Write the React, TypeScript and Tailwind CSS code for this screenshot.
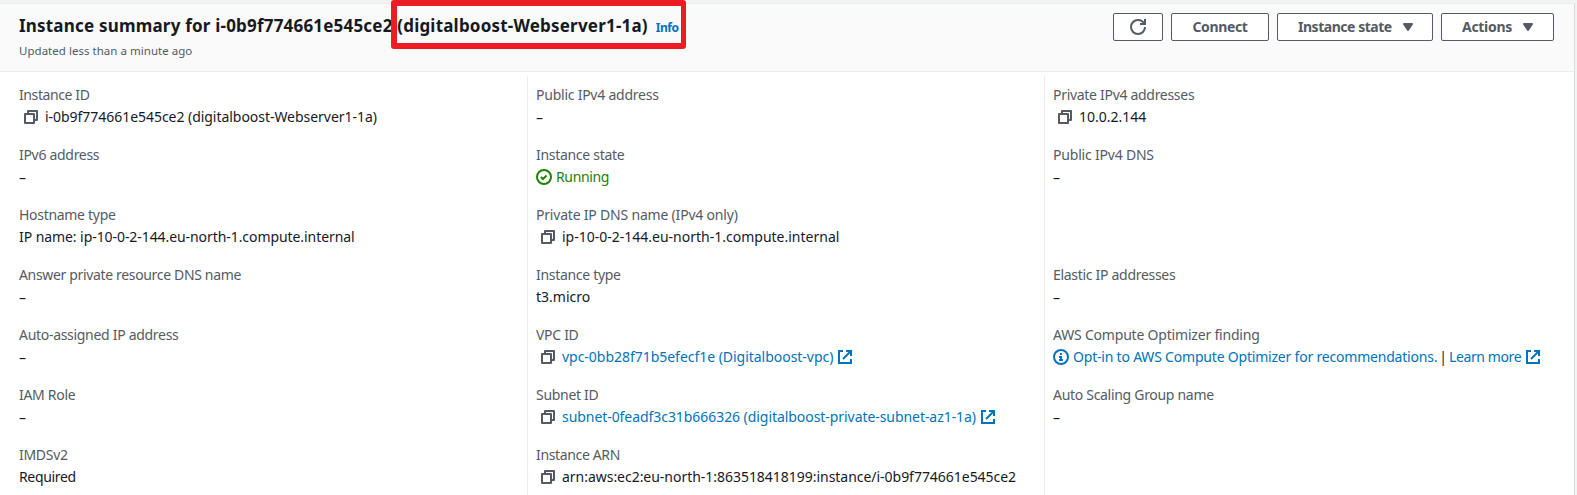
import type { ReactNode } from "react";

type IconProps = { className?: string };

function Icon({ className = "", children }: { className?: string; children: ReactNode }) {
  return (
    <svg viewBox="0 0 16 16" className={`size-4 shrink-0 fill-none stroke-current stroke-2 ${className}`}>
      {children}
    </svg>
  );
}

const CopyIcon = () => (
  <Icon className="ml-1 mr-1.5 text-[#545b64]">
    <path d="M2 5h9v9H2z" strokeLinejoin="round" />
    <path d="M5 5V2h9v9h-3" strokeLinejoin="round" />
  </Icon>
);

const ExternalIcon = ({ className }: IconProps) => (
  <Icon className={className}>
    <path d="M9 2h5v5" />
    <path d="m6 10 7.5-7.5" />
    <path d="M14 10v4H2V2h4" />
  </Icon>
);

const RefreshIcon = () => (
  <Icon>
    <path d="M10 5h5V0" />
    <path d="M15 8a7 7 0 0 1-14 0 7 7 0 0 1 7-7 6.87 6.87 0 0 1 6.3 4" />
  </Icon>
);

const CaretIcon = () => (
  <Icon className="ml-2">
    <path d="M4 5h8l-4 6-4-6z" fill="currentColor" strokeLinejoin="round" />
  </Icon>
);

const SuccessIcon = () => (
  <Icon className="mr-1">
    <circle cx="8" cy="8" r="7" />
    <path d="m5 8 2 2 3.5-3.5" />
  </Icon>
);

const InfoIcon = () => (
  <Icon className="mr-1">
    <circle cx="8" cy="8" r="7" />
    <path d="M8 11V8H6M10 11H6M8 6V4" />
  </Icon>
);

function Field({ label, tight = "tracking-[-0.3px]", children }: { label: string; tight?: string; children?: ReactNode }) {
  return (
    <div className="h-11">
      <div className="flex h-[22px] text-[#545b64]"><span className={tight}>{label}</span></div>
      <div className="flex h-[22px] items-center">{children ?? <span className="pt-0.5">–</span>}</div>
    </div>
  );
}

function Button({ className, children }: { className: string; children: ReactNode }) {
  return (
    <button className={`flex h-7 items-center rounded-xs border border-[#545b64] bg-white font-bold ${className}`}>
      {children}
    </button>
  );
}

export default function App() {
  return (
    <div className="h-[495px] w-[1577px] overflow-hidden bg-[#f2f3f3] pt-[3px] font-['Noto_Sans','Open_Sans',sans-serif] text-sm leading-[22px] whitespace-nowrap text-[#16191f]">
      <div className="h-full w-[1575px] border-t border-r border-t-[#eaeded] border-r-[#d5dbdb] bg-white">
        <header className="relative flex h-[68px] justify-between border-b border-[#eaeded] bg-[#fafafa] pr-5 pl-[19px]">
          <div className="pt-[11px]">
            <div className="flex items-baseline">
              <h1 className="text-[17px] font-bold tracking-[0.2px]">
                Instance summary for i-0b9f774661e545ce2 (digitalboost-Webserver1-1a)
              </h1>
              <a className="ml-2 text-xs font-bold tracking-[-0.5px] text-[#0073bb]">Info</a>
            </div>
            <p className="mt-[3px] text-[11.5px] tracking-[0.03px] text-[#545b64]">Updated less than a minute ago</p>
          </div>
          <div className="flex gap-2 pt-[9px] text-[#545b64]">
            <Button className="w-[50px] justify-center"><RefreshIcon /></Button>
            <Button className="w-[98px] justify-center tracking-[-0.35px]">Connect</Button>
            <Button className="w-[156px] pl-5 tracking-[-0.47px]">Instance state<CaretIcon /></Button>
            <Button className="w-[113px] pl-5 tracking-[-0.3px]">Actions<CaretIcon /></Button>
          </div>
          <div className="absolute top-[-4px] left-[391px] h-[49px] w-[295px] rounded-[3px] border-6 border-r-5 border-[#ed1c24]" />
        </header>

        <main className="mt-1 grid h-[419px] grid-cols-[527px_517px_530px]">
          <section className="flex flex-col gap-4 pt-2 pl-[19px]">
            <Field label="Instance ID" tight="tracking-[-0.4px]">
              <CopyIcon /><span className="tracking-[-0.04px]">i-0b9f774661e545ce2 (digitalboost-Webserver1-1a)</span>
            </Field>
            <Field label="IPv6 address" />
            <Field label="Hostname type">
              <span className="tracking-[-0.07px]">IP name: ip-10-0-2-144.eu-north-1.compute.internal</span>
            </Field>
            <Field label="Answer private resource DNS name" tight="tracking-[-0.34px]" />
            <Field label="Auto-assigned IP address" />
            <Field label="IAM Role" />
            <Field label="IMDSv2"><span className="tracking-[-0.35px]">Required</span></Field>
          </section>

          <section className="flex flex-col gap-4 border-l border-[#eaeded] pt-2 pl-2">
            <Field label="Public IPv4 address" tight="tracking-[-0.24px]" />
            <Field label="Instance state">
              <span className="flex items-center text-[#1d8102]"><SuccessIcon /><span className="tracking-[-0.35px]">Running</span></span>
            </Field>
            <Field label="Private IP DNS name (IPv4 only)" tight="tracking-[-0.2px]">
              <CopyIcon />ip-10-0-2-144.eu-north-1.compute.internal
            </Field>
            <Field label="Instance type">t3.micro</Field>
            <Field label="VPC ID">
              <CopyIcon />
              <a className="flex items-center text-[#0073bb]"><span className="tracking-[-0.03px]">vpc-0bb28f71b5efecf1e (Digitalboost-vpc)</span><ExternalIcon className="ml-1" /></a>
            </Field>
            <Field label="Subnet ID">
              <CopyIcon />
              <a className="flex items-center text-[#0073bb]"><span className="tracking-[-0.06px]">subnet-0feadf3c31b666326 (digitalboost-private-subnet-az1-1a)</span><ExternalIcon className="ml-1" /></a>
            </Field>
            <Field label="Instance ARN" tight="tracking-[-0.35px]">
              <CopyIcon /><span className="tracking-[-0.03px]">arn:aws:ec2:eu-north-1:863518418199:instance/i-0b9f774661e545ce2</span>
            </Field>
          </section>

          <section className="flex flex-col gap-4 border-l border-[#eaeded] pt-2 pl-2">
            <Field label="Private IPv4 addresses"><CopyIcon />10.0.2.144</Field>
            <Field label="Public IPv4 DNS" tight="tracking-[-0.2px]" />
            <div className="h-11" />
            <Field label="Elastic IP addresses" />
            <Field label="AWS Compute Optimizer finding" tight="tracking-[-0.2px]">
              <a className="flex items-center text-[#0073bb]"><InfoIcon /><span className="tracking-[-0.2px]">Opt-in to AWS Compute Optimizer for recommendations.</span></a>
              <span className="mx-0.5">|</span>
              <a className="flex items-center text-[#0073bb]"><span className="tracking-[-0.4px]">Learn more</span><ExternalIcon className="ml-1" /></a>
            </Field>
            <Field label="Auto Scaling Group name" />
          </section>
        </main>
      </div>
    </div>
  );
}
